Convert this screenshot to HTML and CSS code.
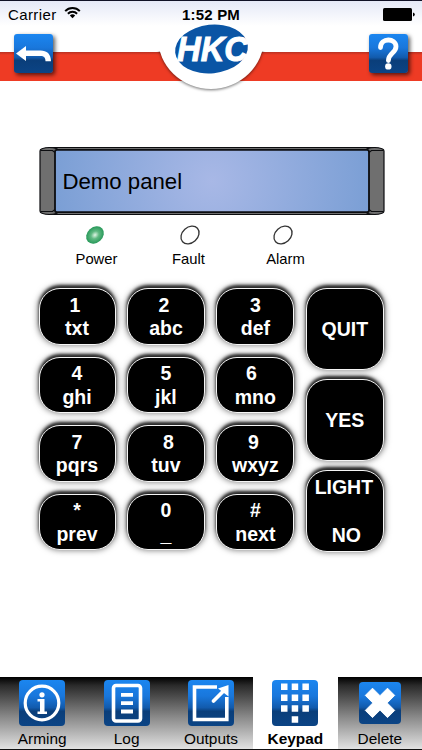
FILE: index.html
```
<!DOCTYPE html>
<html lang="en">
<head>
  <meta charset="UTF-8">
  <meta name="viewport" content="width=device-width, initial-scale=1.0">
  <title>Keypad</title>
  <link rel="stylesheet" href="styles.css">
</head>
<body>
  <svg class="defs" width="0" height="0" aria-hidden="true">
    <defs>
      <linearGradient id="tile" x1="0" y1="0" x2="0" y2="1">
        <stop offset="0" stop-color="#1b86f0"/>
        <stop offset=".35" stop-color="#1977dc"/>
        <stop offset=".6" stop-color="#125bad"/>
        <stop offset=".68" stop-color="#0a3e7a"/>
        <stop offset="1" stop-color="#0b4485"/>
      </linearGradient>
    </defs>
  </svg>

  <div class="app">
    <header class="header">
      <div class="status">
        <div class="carrier">
          <span>Carrier</span>
          <svg width="17" height="13" viewBox="0 0 17 13" fill="none" stroke="#000" stroke-width="2">
            <path d="M1.2 5.1a10.2 10.2 0 0 1 14.6 0"/>
            <path d="M3.9 7.8a6.4 6.4 0 0 1 9.2 0"/>
            <path d="M8.5 12.2 5.8 9.5a3.8 3.8 0 0 1 5.4 0z" fill="#000" stroke="none"/>
          </svg>
        </div>
        <div class="time">1:52 PM</div>
        <svg class="battery" width="32" height="13" viewBox="0 0 32 13">
          <rect width="29" height="13" rx="1.5"/>
          <path d="M30 4.5q1.8.6 1.8 2t-1.8 2z"/>
        </svg>
      </div>
      <div class="nav">
        <button class="nav-btn">
          <svg width="39" height="39" viewBox="0 0 39 39">
            <rect width="39" height="39" rx="3" fill="url(#tile)"/>
            <path d="M2 19.5 12 12v4.500h14.500c6.300 0 10.500 3.400 10.500 10.800h-5.500c0-3.600-1.500-5.300-5-5.300H12v5z" fill="#fff"/>
          </svg>
        </button>
        <svg class="logo" width="112" height="94" viewBox="155 0 112 94">
          <defs>
            <clipPath id="below"><rect x="150" y="51" width="122" height="46"/></clipPath>
          </defs>
          <g clip-path="url(#below)">
            <ellipse class="disc" cx="211" cy="38" rx="53" ry="51" fill="#fff"/>
          </g>
          <ellipse cx="211.500" cy="49" rx="36.500" ry="24.300" fill="#0a55a5" transform="rotate(-6 211.500 49)"/>
          <text class="logo-text" x="177" y="61" textLength="71" lengthAdjust="spacingAndGlyphs">HKC</text>
        </svg>
        <button class="nav-btn">
          <svg width="39" height="39" viewBox="0 0 39 39">
            <rect width="39" height="39" rx="3" fill="url(#tile)"/>
            <path d="M11.500 13.500C11.500 3.500 27 3.800 27 12.600c0 6.600-7.600 6.400-7.600 14" fill="none" stroke="#fff" stroke-width="4.800" stroke-linecap="round"/>
            <circle cx="19.300" cy="32.400" r="3.200" fill="#fff"/>
          </svg>
        </button>
      </div>
    </header>

    <main class="panel">
      <div class="display">
        <svg width="346" height="70" viewBox="0 0 346 70">
          <defs>
            <radialGradient id="lcd" gradientUnits="userSpaceOnUse" cx="173" cy="35" r="158">
              <stop offset="0" stop-color="#a8b8e6"/>
              <stop offset="1" stop-color="#7b9fd5"/>
            </radialGradient>
          </defs>
          <g stroke="#0c0d10" stroke-width="1.200" fill="#6f6f6f">
            <path d="M10 1.500h326v67H10z"/>
            <path d="M1 5q0-1.500 2-2.200Q10 .2 18 2.800V67.200Q10 69.800 3 67.200Q1 66.500 1 65z"/>
            <path d="M345 5q0-1.500-2-2.200Q336 .2 328 2.800V67.200Q336 69.800 343 67.200Q345 66.500 345 65z"/>
            <path d="M1.500 4.500h12l2.500 2M1.500 65.500h12l2.500-2M344.500 4.500h-12l-2.500 2M344.500 65.500h-12l-2.500-2" fill="none"/>
            <rect x="16" y="3.800" width="314" height="62.400" rx="2" fill="url(#lcd)" stroke-width="1.800"/>
          </g>
        </svg>
        <div class="display-text">Demo panel</div>
      </div>

      <div class="leds">
        <div class="led power">
          <svg width="20" height="20" viewBox="0 0 20 20">
            <defs>
              <radialGradient id="green">
                <stop offset="0" stop-color="#e0f5e5"/>
                <stop offset=".45" stop-color="#60b982"/>
                <stop offset="1" stop-color="#28995a"/>
              </radialGradient>
            </defs>
            <ellipse cx="10" cy="10" rx="9.700" ry="7.700" fill="url(#green)" transform="rotate(-42 10 10)"/>
          </svg>
          <span>Power</span>
        </div>
        <div class="led fault">
          <svg width="20" height="20" viewBox="0 0 20 20">
            <ellipse cx="10" cy="10" rx="10" ry="7.700" fill="#fff" stroke="#333" stroke-width="1.300" transform="rotate(-42 10 10)"/>
          </svg>
          <span>Fault</span>
        </div>
        <div class="led alarm">
          <svg width="20" height="20" viewBox="0 0 20 20">
            <ellipse cx="10" cy="10" rx="10" ry="7.700" fill="#fff" stroke="#333" stroke-width="1.300" transform="rotate(-42 10 10)"/>
          </svg>
          <span>Alarm</span>
        </div>
      </div>

      <div class="keypad">
        <div class="keys">
          <button class="key"><span class="num nudge-left">1</span><span>txt</span></button>
          <button class="key"><span class="num nudge-left">2</span><span>abc</span></button>
          <button class="key"><span class="num">3</span><span>def</span></button>
          <button class="key"><span class="num">4</span><span>ghi</span></button>
          <button class="key"><span class="num">5</span><span>jkl</span></button>
          <button class="key"><span class="num nudge-far">6</span><span>mno</span></button>
          <button class="key"><span class="num">7</span><span>pqrs</span></button>
          <button class="key"><span class="num nudge-right">8</span><span>tuv</span></button>
          <button class="key"><span class="num nudge-left">9</span><span>wxyz</span></button>
          <button class="key"><span class="num">*</span><span>prev</span></button>
          <button class="key"><span class="num">0</span><span>_</span></button>
          <button class="key"><span class="num">#</span><span>next</span></button>
        </div>
        <div class="actions">
          <button class="key">QUIT</button>
          <button class="key">YES</button>
          <button class="key light"><span>LIGHT</span><span class="no">NO</span></button>
        </div>
      </div>
    </main>

    <nav class="tabs">
      <a class="tab">
        <svg width="46" height="46" viewBox="0 0 46 46">
          <rect width="46" height="46" rx="4" fill="url(#tile)"/>
          <circle cx="23" cy="23" r="16.800" fill="none" stroke="#fff" stroke-width="3.200"/>
          <circle cx="23" cy="14.800" r="2.600" fill="#fff"/>
          <path d="M18.500 19h7v12.500h2.500v2.500h-9.500v-2.500h2.500v-10h-2.500z" fill="#fff"/>
        </svg>
        <span>Arming</span>
      </a>
      <a class="tab">
        <svg width="46" height="46" viewBox="0 0 46 46">
          <rect width="46" height="46" rx="4" fill="url(#tile)"/>
          <rect x="9.500" y="5.500" width="27" height="35.500" rx="2.500" fill="none" stroke="#fff" stroke-width="3.600"/>
          <path d="M17 14.800h12M17 23.200h12M17 31.500h12" stroke="#fff" stroke-width="3.800"/>
        </svg>
        <span>Log</span>
      </a>
      <a class="tab">
        <svg width="46" height="46" viewBox="0 0 46 46">
          <rect width="46" height="46" rx="4" fill="url(#tile)"/>
          <path d="M29 7H6.500v32.500h32.300V17" fill="none" stroke="#fff" stroke-width="3.600"/>
          <path d="M25.500 21 36.500 10" stroke="#fff" stroke-width="3.800" stroke-linecap="round"/>
          <path d="M40.500 5v11.500L30 8.500z" fill="#fff"/>
        </svg>
        <span>Outputs</span>
      </a>
      <a class="tab active">
        <svg width="46" height="46" viewBox="0 0 46 46">
          <rect width="46" height="46" rx="4" fill="url(#tile)"/>
          <path d="M9 3.500h6.500V10H9zM19.700 3.500h6.500V10h-6.500zM30.400 3.500h6.500V10h-6.500zM9 14.500h6.500V21H9zM19.700 14.500h6.500V21h-6.500zM30.400 14.500h6.500V21h-6.500zM9 25.300h6.500v6.500H9zM19.700 25.300h6.500v6.500h-6.500zM30.400 25.300h6.500v6.500h-6.500zM19.700 36.300h6.500v6.500h-6.500z" fill="#fff"/>
        </svg>
        <span>Keypad</span>
      </a>
      <a class="tab">
        <svg width="46" height="46" viewBox="0 0 46 46">
          <rect x="2" y="2" width="42" height="42" rx="4" fill="url(#tile)"/>
          <path d="M15.500 8.200 23 15.700l7.500-7.500 7.200 7.200-7.500 7.500 7.500 7.500-7.200 7.200-7.500-7.500-7.500 7.500-7.200-7.200 7.500-7.500-7.500-7.500z" fill="#fff" stroke="#fff" stroke-linejoin="round"/>
        </svg>
        <span>Delete</span>
      </a>
    </nav>
  </div>
</body>
</html>
```
FILE: styles.css
```
* { box-sizing: border-box; }
body { margin: 0; background: #fff; color: #000; font-family: "Liberation Sans", Arial, sans-serif; }
button { padding: 0; border: none; background: none; font-family: inherit; cursor: pointer; }
svg { display: block; overflow: visible; flex-shrink: 0; }
.defs { position: absolute; }
.app { display: flex; flex-direction: column; width: 422px; height: 750px; overflow: hidden; }

/* header */
.header { height: 94px; border-top: 1px solid #101126; background: linear-gradient(#e5e9f7, #fff 25px, #fff 51px, #b93122 51px, #ee3b24 54px, #ee3b24 80px, #fff 80px); }
.status { position: relative; z-index: 1; display: grid; grid-template-columns: 1fr auto 1fr; align-items: center; height: 27px; padding: 0 8px; font-size: 15px; }
.carrier { display: flex; gap: 7px; letter-spacing: 0.4px; }
.time { font-weight: bold; letter-spacing: 0.2px; }
.battery { justify-self: end; margin-right: -1px; }
.nav { display: flex; justify-content: space-between; align-items: flex-start; padding: 6px 14px 0; }
.nav-btn { border-radius: 3px; box-shadow: 2px 2px 4px rgba(0,0,0,0.65); }
.logo { margin-top: -34px; }
.disc { filter: drop-shadow(0 1px 1.5px rgba(0,0,0,0.55)); }
.logo-text { fill: #fff; stroke: #fff; stroke-width: 1px; font-size: 35px; font-weight: bold; font-style: italic; }

/* lcd and leds */
.panel { flex: 1; padding: 52px 38px 0 38.500px; }
.display { display: grid; align-items: center; height: 70px; }
.display > * { grid-area: 1 / 1; }
.display-text { z-index: 1; padding: 1px 0 0 24px; font-size: 22.200px; }
.leds { display: flex; height: 72px; padding: 9px 0 0 1px; }
.led { display: flex; flex-direction: column; align-items: center; gap: 6px; font-size: 14.800px; line-height: 17px; }
.led.power { width: 114px; }
.led.fault { width: 70px; }
.led.alarm { width: 124px; }
.power svg { margin-left: -3px; }
.alarm svg { margin-left: -5px; }
.fault svg { margin-left: 3px; }

/* keypad */
.keypad { display: flex; gap: 11.500px; }
.keys { display: grid; grid-template-columns: 77px 78.500px 78px; grid-auto-rows: 56.500px; column-gap: 11.200px; row-gap: 12px; }
.actions { display: grid; grid-template-rows: repeat(3, 82px); row-gap: 9px; width: 78px; }
.key { display: flex; flex-direction: column; align-items: center; justify-content: center; padding-top: 2px; border: 1.500px solid #f5f5f5; border-radius: 21px; background: #000; color: #fff; font-size: 19.500px; font-weight: bold; line-height: 23.400px; box-shadow: 0 -3px 3px rgba(0,0,0,0.75), 0 -1px 6px 1px rgba(0,0,0,0.55); }
.nudge-left { margin-right: 4px; }
.nudge-far { margin-right: 8px; }
.nudge-right { margin-left: 5px; }
.light { justify-content: space-between; padding: 5px 0 4px; }
.light > span:first-child { margin-right: 2px; }
.no { margin-left: 3px; }

/* bottom tabs */
.tabs { display: flex; height: 73px; border-bottom: 1px solid #111; }
.tab { flex: 1; display: flex; flex-direction: column; align-items: center; padding-top: 3px; background: linear-gradient(#000, #2b2b2b 12%, #888 55%, #e2e2e2); font-size: 15.400px; line-height: 25px; }
.tab.active { background: #fff; font-weight: bold; }
```
